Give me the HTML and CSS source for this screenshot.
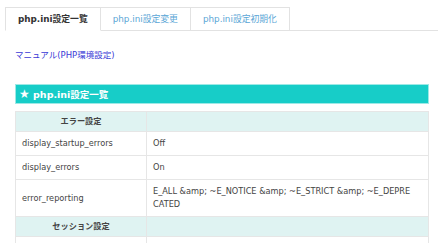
FILE: index.html
```html
<!DOCTYPE html>
<html lang="ja">
<head>
    <meta charset="UTF-8">
    <meta name="viewport" content="width=device-width, initial-scale=1.0">
    <title>php.ini設定</title>
    <link rel="stylesheet" href="styles.css">
</head>
<body>

<ul class="tabs">
    <li class="tab active">php.ini設定一覧</li>
    <li class="tab">php.ini設定変更</li>
    <li class="tab">php.ini設定初期化</li>
</ul>

<div class="content">
    <a class="manual-link" href="#">マニュアル(PHP環境設定)</a>

    <h2 class="section-title"><span class="star">★</span> php.ini設定一覧</h2>

    <table class="ini-table">
        <tr class="group-row">
            <th>エラー設定</th>
            <td></td>
        </tr>
        <tr>
            <td>display_startup_errors</td>
            <td>Off</td>
        </tr>
        <tr>
            <td>display_errors</td>
            <td>On</td>
        </tr>
        <tr>
            <td>error_reporting</td>
            <td class="long">E_ALL &amp;amp; ~E_NOTICE &amp;amp; ~E_STRICT &amp;amp; ~E_DEPRECATED</td>
        </tr>
        <tr class="group-row">
            <th>セッション設定</th>
            <td></td>
        </tr>
        <tr>
            <td></td>
            <td></td>
        </tr>
    </table>
</div>

</body>
</html>
```

FILE: styles.css
```css
body {
    margin: 0;
    font-family: "DejaVu Sans", "Noto Sans CJK JP", sans-serif;
    font-size: 8.2px;
    color: #444;
    background: #fff;
}

/* Tabs */
.tabs {
    list-style: none;
    display: flex;
    margin: 7px 7px 0 5px;
    padding: 0;
    border-bottom: 1px solid #e2e2e2;
}

.tab {
    padding: 0 12px;
    height: 22px;
    line-height: 22px;
    border: 1px solid #e2e2e2;
    border-bottom: none;
    margin-bottom: -1px;
    font-size: 8.8px;
    color: #5aa6d6;
    background: #fff;
}

.tab + .tab {
    border-left: none;
}

.tab.active {
    color: #333;
    font-weight: bold;
    border-bottom: 1px solid #fff;
}

/* Main */
.content {
    padding: 0 16px 0 15px;
}

.manual-link {
    display: block;
    margin-top: 17px;
    font-size: 8.5px;
    color: #3a3ad6;
    text-decoration: none;
}

.section-title {
    margin: 24px 0 7px;
    height: 18px;
    line-height: 18px;
    padding: 0 3px;
    background: #17cdc8;
    border: 1px solid #9de9e6;
    color: #fff;
    font-size: 9.5px;
    font-weight: bold;
}

.star {
    font-size: 12px;
}

/* Table */
.ini-table {
    width: 100%;
    border-collapse: collapse;
}

.ini-table th,
.ini-table td {
    border: 1px solid #e6e6e6;
    padding: 5px 6px;
    text-align: left;
    line-height: 13px;
    font-weight: normal;
}

.ini-table td:first-child,
.ini-table th:first-child {
    width: 118px;
}

.ini-table tr td {
    height: 13px;
}

.ini-table .long {
    word-break: break-all;
    padding-right: 15px;
}

.group-row th,
.group-row td {
    background: #dff3f2;
    padding: 3px 6px;
}

.group-row th {
    text-align: center;
    font-weight: bold;
}
```
